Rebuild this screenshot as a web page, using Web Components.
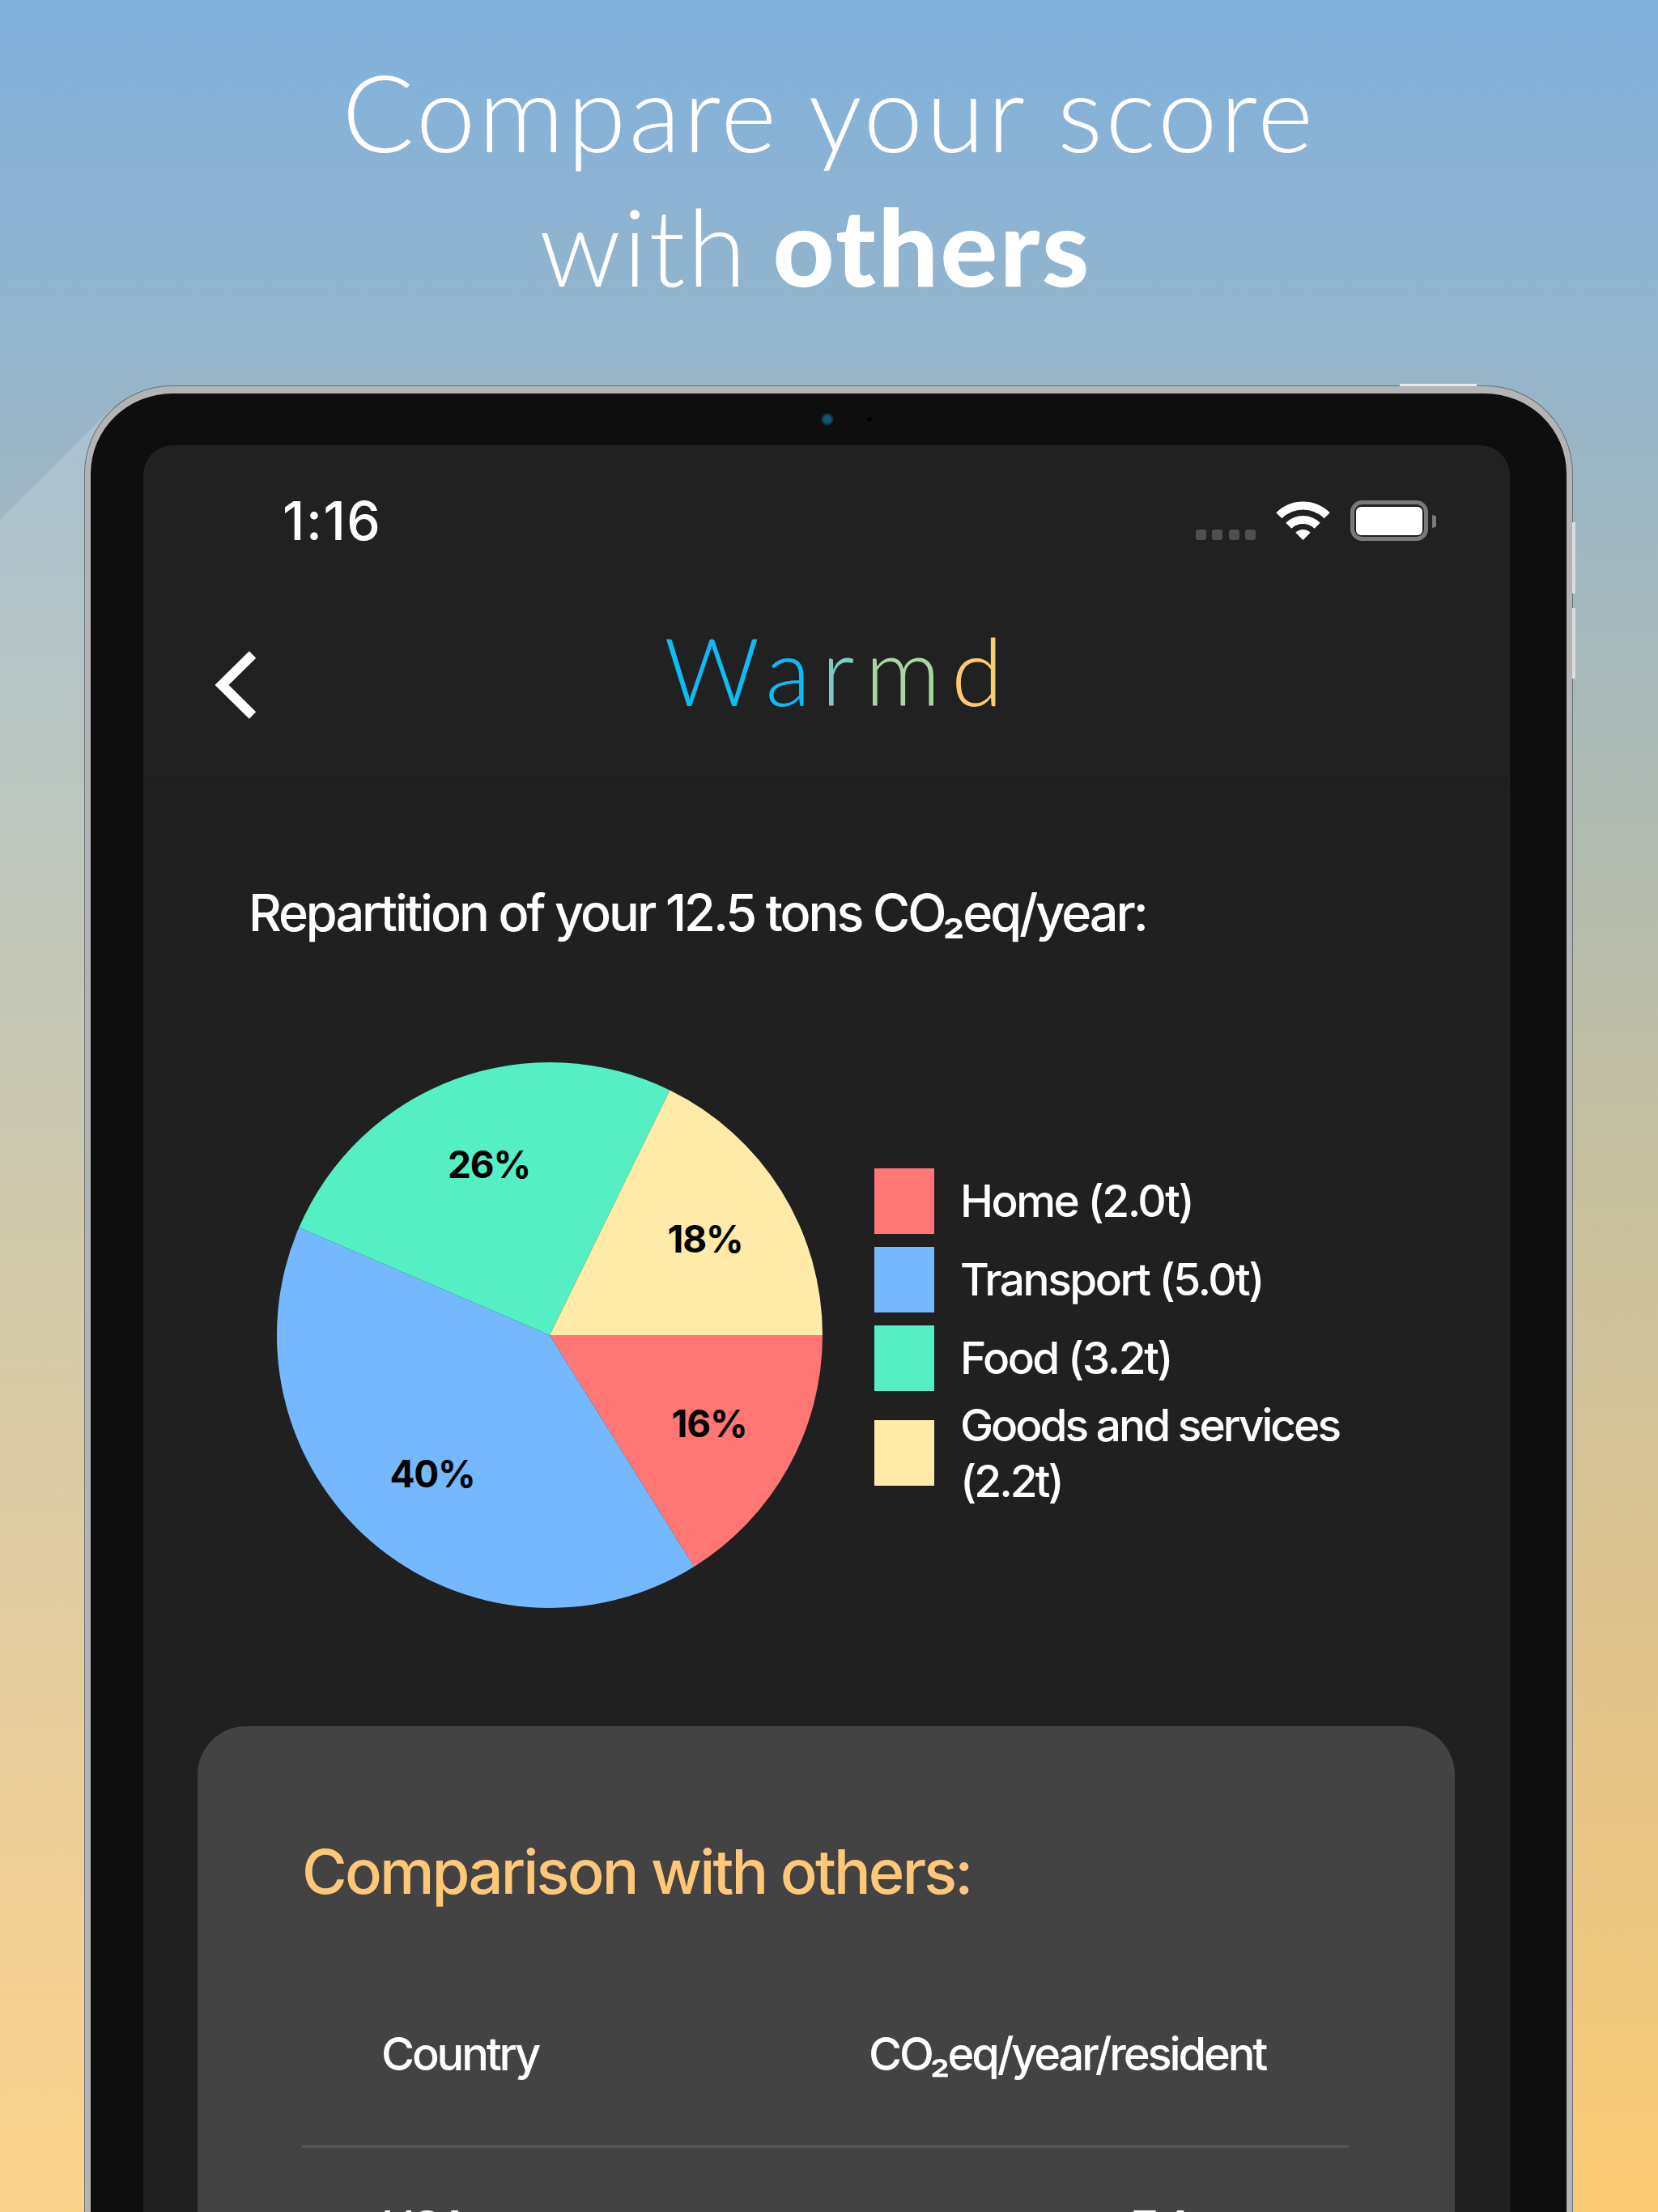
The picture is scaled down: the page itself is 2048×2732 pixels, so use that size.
<!DOCTYPE html>
<html lang="en">
<head>
<meta charset="utf-8">
<title>Warmd</title>
<style>
  html, body { margin: 0; padding: 0; background: #202020; }
</style>
</head>
<body>
<promo-page>
  <promo-headline></promo-headline>
  <tablet-frame>
    <status-bar></status-bar>
    <nav-bar></nav-bar>
    <score-screen></score-screen>
  </tablet-frame>
</promo-page>

<script>
// Fondo con degradado y la franja diagonal clara de la izquierda
class PromoPage extends HTMLElement {
  constructor() {
    super();
    this.attachShadow({ mode: "open" });
  }

  connectedCallback() {
    this.shadowRoot.innerHTML = `
      <style>
        :host {
          display: block;
          position: relative;
          width: 2048px;
          height: 2732px;
          overflow: hidden;
          background: linear-gradient(180deg, #80b1de 0%, #c4bfa0 52%, #fcca75 100%);
        }
        .shine {
          position: absolute;
          inset: 0;
          background: rgba(255, 255, 255, 0.16);
          clip-path: polygon(0 642px, 138px 504px, 138px 2732px, 0 2732px);
        }
        .content { position: relative; }
      </style>
      <div class="shine"></div>
      <div class="content"><slot></slot></div>
    `;
  }
}

class PromoHeadline extends HTMLElement {
  constructor() {
    super();
    this.attachShadow({ mode: "open" });
  }

  connectedCallback() {
    this.shadowRoot.innerHTML = `
      <style>
        :host {
          display: block;
          padding-top: 54px;
          font-family: "Lato", "Liberation Sans", sans-serif;
          font-size: 132px;
          line-height: 166px;
          font-weight: 300;
          letter-spacing: 3.4px;
          color: #fff;
          text-align: center;
        }
        .second {
          display: block;
          padding-right: 34px;
          letter-spacing: 2.5px;
          word-spacing: -8px;
        }
        b { font-weight: 900; }
      </style>
      <span>Compare your score</span>
      <span class="second">with <b>others</b></span>
    `;
  }
}

// Marco del iPad: bisel, cámara y botones
class TabletFrame extends HTMLElement {
  constructor() {
    super();
    this.attachShadow({ mode: "open" });
  }

  connectedCallback() {
    this.shadowRoot.innerHTML = `
      <style>
        :host {
          display: block;
          position: relative;
          box-sizing: border-box;
          width: 1837px;
          margin: 91px 0 0 105px;
          padding: 65px 71px 0 66px;
          height: 2400px;
          background: #0e0e0e;
          border: 7px solid #b4b4b6;
          border-top-width: 9px;
          border-radius: 108px;
          box-shadow: 0 0 0 1px #6a7276;
        }
        .screen {
          background: #212121;
          border-radius: 36px 36px 0 0;
          box-shadow: 0 0 0 1px #252525;
          height: 100%;
        }
        .camera, .sensor, .btn { position: absolute; }
        .camera {
          left: 902px; top: 24px;
          width: 16px; height: 16px;
          border-radius: 50%;
          background: radial-gradient(circle, #0e5a7c 0 35%, #10181c 70%);
        }
        .sensor {
          left: 959px; top: 29px;
          width: 6px; height: 6px;
          border-radius: 50%;
          background: #000;
        }
        .btn { background: #dcdcdc; }
        .top { left: 1617px; top: -12px; width: 95px; height: 3px; background: #e8e8e8; }
        .vol-up { right: -11px; top: 159px; width: 4px; height: 88px; }
        .vol-down { right: -11px; top: 265px; width: 4px; height: 87px; }
      </style>
      <div class="btn top"></div>
      <div class="btn vol-up"></div>
      <div class="btn vol-down"></div>
      <div class="camera"></div>
      <div class="sensor"></div>
      <div class="screen"><slot></slot></div>
    `;
  }
}

class StatusBar extends HTMLElement {
  constructor() {
    super();
    this.attachShadow({ mode: "open" });
  }

  connectedCallback() {
    this.shadowRoot.innerHTML = `
      <style>
        :host {
          display: flex;
          justify-content: space-between;
          align-items: center;
          padding: 67px 90px 0 171px;
          font-family: "Inter", "Liberation Sans", sans-serif;
          font-size: 66px;
          line-height: 50px;
          font-weight: 550;
          letter-spacing: 1.5px;
          color: #fff;
        }
        svg { display: block; }
      </style>
      <span>1:16</span>
      <svg width="297" height="50" viewBox="0 0 297 50">
        <g fill="#4f4f4f">
          <rect x="0" y="36" width="13" height="13" rx="3"/>
          <rect x="20" y="36" width="13" height="13" rx="3"/>
          <rect x="41" y="36" width="13" height="13" rx="3"/>
          <rect x="61" y="36" width="13" height="13" rx="3"/>
        </g>
        <g fill="none" stroke="#fff" stroke-width="10">
          <path d="M 102.8 18.8 A 42 42 0 0 1 162.2 18.8"/>
          <path d="M 114.8 31.3 A 25 25 0 0 1 150.2 31.3"/>
        </g>
        <path d="M 123.3 39.8 A 13 13 0 0 1 141.7 39.8 L 132.5 49 Z" fill="#fff"/>
        <rect x="193.5" y="2.5" width="91" height="45" rx="12" fill="none" stroke="#7a7a7a" stroke-width="5"/>
        <rect x="198" y="8" width="82" height="35" rx="6" fill="#fff"/>
        <path d="M 292 18 A 8 8 0 0 1 292 34 Z" fill="#7a7a7a"/>
      </svg>
    `;
  }
}

class NavBar extends HTMLElement {
  constructor() {
    super();
    this.attachShadow({ mode: "open" });
  }

  connectedCallback() {
    const letras = [
      ["W", "#0dbcf7"], ["a", "#0dbcf7"], ["r", "#7fcbc3"], ["m", "#a9d5a3"], ["d", "#fdca6f"]
    ];
    this.shadowRoot.innerHTML = `
      <style>
        :host {
          display: grid;
          grid-template-columns: 1fr auto 1fr;
          align-items: center;
          box-sizing: border-box;
          height: 290px;
          padding: 66px 0 0 30px;
          font-family: "Lato", "Liberation Sans", sans-serif;
        }
        svg { display: block; margin-left: 54px; }
        h1 {
          margin: 0 0 36px;
          font-size: 116px;
          line-height: 132px;
          font-weight: 300;
          letter-spacing: 13px;
        }
      </style>
      <svg width="60" height="90" viewBox="0 0 60 90">
        <polyline points="50,7.5 12,45 50,82.5" fill="none" stroke="#fff" stroke-width="12"/>
      </svg>
      <h1>${letras.map(l => `<span style="color:${l[1]}">${l[0]}</span>`).join("")}</h1>
      <div></div>
    `;
  }
}

// Tarta dibujada a partir de las toneladas de cada categoría
class PieChart extends HTMLElement {
  constructor() {
    super();
    this.attachShadow({ mode: "open" });
  }

  connectedCallback() {
    const radio = 337;
    const total = this.datos.reduce((s, d) => s + d.valor, 0);
    let angulo = 0;
    const sectores = this.datos.map(d => {
      const fin = angulo + d.valor / total * Math.PI * 2;
      const x1 = radio * Math.cos(angulo), y1 = radio * Math.sin(angulo);
      const x2 = radio * Math.cos(fin), y2 = radio * Math.sin(fin);
      const grande = fin - angulo > Math.PI ? 1 : 0;
      angulo = fin;
      return `<path d="M0 0 L${x1} ${y1} A${radio} ${radio} 0 ${grande} 1 ${x2} ${y2} Z" fill="${d.color}"/>`;
    }).join("");
    const etiquetas = this.datos.map(d =>
      `<text x="${d.tx}" y="${d.ty}">${d.texto}</text>`
    ).join("");
    this.shadowRoot.innerHTML = `
      <style>
        :host { display: block; width: 674px; height: 674px; flex: none; }
        svg { display: block; overflow: visible; }
        text {
          font-family: "Inter", "Liberation Sans", sans-serif;
          font-size: 46px;
          font-weight: 650;
          letter-spacing: -1.2px;
          text-anchor: middle;
          dominant-baseline: central;
          fill: #000;
        }
      </style>
      <svg width="674" height="674" viewBox="-337 -337 674 674">${sectores}${etiquetas}</svg>
    `;
  }

  get datos() {
    return [
      { valor: 2.0, color: "#ff7675", texto: "16%", tx: 197, ty: 109 },
      { valor: 5.0, color: "#74b9ff", texto: "40%", tx: -145, ty: 171 },
      { valor: 3.2, color: "#55efc4", texto: "26%", tx: -75, ty: -211 },
      { valor: 2.2, color: "#ffeaa7", texto: "18%", tx: 192, ty: -119.5 }
    ];
  }
}

class LegendItem extends HTMLElement {
  constructor() {
    super();
    this.attachShadow({ mode: "open" });
  }

  connectedCallback() {
    this.shadowRoot.innerHTML = `
      <style>
        :host {
          display: flex;
          align-items: center;
          gap: 32px;
          min-height: 81px;
        }
        .swatch {
          flex: none;
          width: 74px;
          height: 81px;
          background: ${this.getAttribute("color")};
        }
        .label { width: 530px; }
      </style>
      <div class="swatch"></div>
      <div class="label"><slot></slot></div>
    `;
  }
}

class ChartLegend extends HTMLElement {
  constructor() {
    super();
    this.attachShadow({ mode: "open" });
  }

  connectedCallback() {
    this.shadowRoot.innerHTML = `
      <style>
        :host {
          display: flex;
          flex-direction: column;
          gap: 16px;
          margin-top: 8px;
          font-size: 55px;
          font-weight: 450;
          line-height: 69px;
          letter-spacing: -2.5px;
          color: #fff;
        }
      </style>
      <slot></slot>
    `;
  }
}

class ComparisonRow extends HTMLElement {
  constructor() {
    super();
    this.attachShadow({ mode: "open" });
  }

  connectedCallback() {
    this.shadowRoot.innerHTML = `
      <style>
        :host {
          display: grid;
          grid-template-columns: 602px 1fr;
          padding-left: 98px;
          font-size: 56px;
          font-weight: 450;
          line-height: 68px;
          letter-spacing: -3.15px;
          color: #fff;
        }
      </style>
      <div><slot name="pais"></slot></div>
      <div style="padding-left:${this.getAttribute("offset") || 0}px"><slot name="valor"></slot></div>
    `;
  }
}

class ComparisonCard extends HTMLElement {
  constructor() {
    super();
    this.attachShadow({ mode: "open" });
  }

  connectedCallback() {
    this.shadowRoot.innerHTML = `
      <style>
        :host {
          display: block;
          box-sizing: border-box;
          margin: 146px 67px 0 66px;
          padding: 133px 131px 0 129px;
          background: #434343;
          border-radius: 60px 60px 0 0;
          height: 700px;
        }
        h2 {
          margin: 0 0 146px 0;
          font-size: 76px;
          line-height: 92px;
          font-weight: 450;
          letter-spacing: -2.85px;
          color: #ffc878;
        }
        hr {
          border: 0;
          height: 4px;
          margin: 78px 0 64px;
          background: #555;
        }
      </style>
      <h2>Comparison with others:</h2>
      <comparison-row>
        <span slot="pais">Country</span>
        <span slot="valor">CO₂eq/year/resident</span>
      </comparison-row>
      <hr>
      <comparison-row offset="325">
        <span slot="pais">USA</span>
        <span slot="valor">7.4</span>
      </comparison-row>
    `;
  }
}

class ScoreScreen extends HTMLElement {
  constructor() {
    super();
    this.attachShadow({ mode: "open" });
  }

  connectedCallback() {
    this.shadowRoot.innerHTML = `
      <style>
        :host {
          display: block;
          padding-top: 131px;
          font-family: "Inter", "Liberation Sans", sans-serif;
          background: linear-gradient(180deg, #1d1d1d 0, #202020 22px);
        }
        p {
          margin: 0 0 147px 129px;
          font-size: 63px;
          font-weight: 450;
          line-height: 76px;
          letter-spacing: -3.05px;
          color: #fff;
        }
        .chart {
          display: flex;
          align-items: center;
          gap: 64px;
          padding-left: 164px;
        }
        .doble { margin-top: -8px; letter-spacing: -3px; }
      </style>
      <p>Repartition of your 12.5 tons CO₂eq/year:</p>
      <div class="chart">
        <pie-chart></pie-chart>
        <chart-legend>
          <legend-item color="#ff7675">Home (2.0t)</legend-item>
          <legend-item color="#74b9ff">Transport (5.0t)</legend-item>
          <legend-item color="#55efc4">Food (3.2t)</legend-item>
          <legend-item class="doble" color="#ffeaa7">Goods and services (2.2t)</legend-item>
        </chart-legend>
      </div>
      <comparison-card></comparison-card>
    `;
  }
}

customElements.define("promo-page", PromoPage);
customElements.define("promo-headline", PromoHeadline);
customElements.define("tablet-frame", TabletFrame);
customElements.define("status-bar", StatusBar);
customElements.define("nav-bar", NavBar);
customElements.define("pie-chart", PieChart);
customElements.define("legend-item", LegendItem);
customElements.define("chart-legend", ChartLegend);
customElements.define("comparison-row", ComparisonRow);
customElements.define("comparison-card", ComparisonCard);
customElements.define("score-screen", ScoreScreen);
</script>
</body>
</html>
